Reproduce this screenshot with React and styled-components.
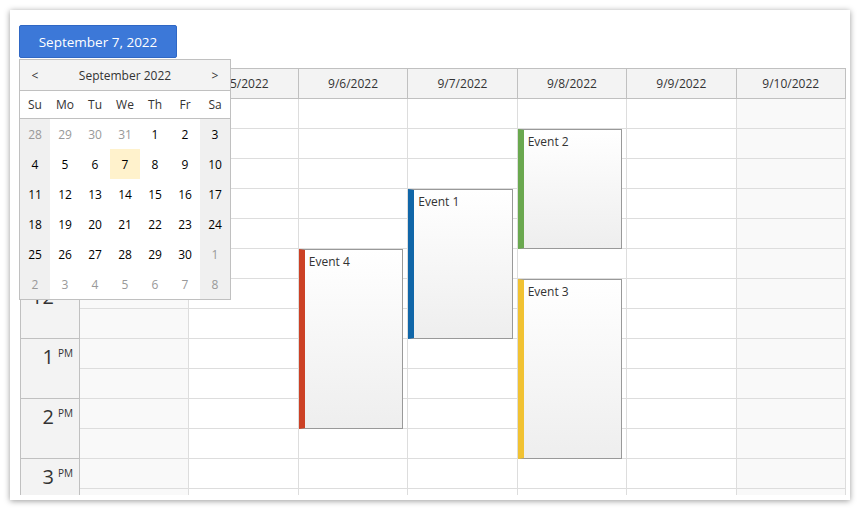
import styled, { createGlobalStyle } from "styled-components";

const GlobalStyle = createGlobalStyle`
	body {
		margin: 0;
		background: #fff;
		font-family: "Open Sans", "Noto Sans", sans-serif;
		color: #333;
	}
`;

const Page = styled.div`
	padding: 10px;
`;

const Card = styled.div`
	position: relative;
	width: 840px;
	height: 490px;
	box-sizing: border-box;
	padding: 15px 0 0 9px;
	background: #fff;
	box-shadow: 0 1px 6px rgba(0, 0, 0, 0.4);
	overflow: hidden;
`;

const DateButton = styled.button`
	display: block;
	width: 158px;
	height: 33px;
	margin: 0;
	padding: 0;
	border: 1px solid #2f67c4;
	border-radius: 2px;
	background: #3c78d8;
	color: #fff;
	font-family: "Open Sans", sans-serif;
	font-size: 13.5px;
	cursor: pointer;
`;

const Scheduler = styled.div`
	width: 826px;
	height: 427px;
	margin: 10px 0 0 1px;
	box-sizing: border-box;
	border-left: 1px solid #c0c0c0;
	overflow: hidden;
	font-size: 12px;
`;

const HeaderRow = styled.div`
	display: grid;
	grid-template-columns: 59px repeat(7, 1fr);
	height: 31px;
	box-sizing: border-box;
	border-top: 1px solid #c0c0c0;
	border-bottom: 1px solid #c0c0c0;
	background: #f3f3f3;
`;

const HeaderCell = styled.div`
	display: flex;
	align-items: center;
	justify-content: center;
	border-right: 1px solid #c0c0c0;
	color: #333;
`;

const Body = styled.div`
	display: grid;
	grid-template-columns: 59px repeat(7, 1fr);
`;

const TimeColumn = styled.div`
	display: flex;
	flex-direction: column;
	background: #f3f3f3;
	border-right: 1px solid #c0c0c0;
`;

const HourCell = styled.div`
	display: flex;
	justify-content: flex-end;
	align-items: flex-start;
	height: 60px;
	box-sizing: border-box;
	padding: 4px 6px 0 0;
	border-bottom: 1px solid #c0c0c0;
	color: #333;
`;

const HourNumber = styled.span`
	font-size: 20px;
	line-height: 27px;
`;

const HourSuffix = styled.span`
	font-size: 10px;
	line-height: 14px;
	margin: 3px 0 0 4px;
`;

const DayColumn = styled.div`
	position: relative;
	display: flex;
	flex-direction: column;
	border-right: 1px solid #ddd;
	background: ${(p) => (p.$weekend ? "#f9f9f9" : "#fff")};
`;

const Slot = styled.div`
	height: 30px;
	box-sizing: border-box;
	border-bottom: 1px solid #ddd;
`;

const Event = styled.div`
	position: absolute;
	left: 0;
	right: 4px;
	box-sizing: border-box;
	padding: 3px 4px;
	border: 1px solid #999;
	border-left: 6px solid ${(p) => p.$color};
	background: linear-gradient(to bottom, #fff 0%, #eee 100%);
	color: #333;
	font-size: 12px;
`;

const Picker = styled.div`
	position: absolute;
	top: 49px;
	left: 9px;
	z-index: 5;
	width: 212px;
	box-sizing: border-box;
	border: 1px solid #c0c0c0;
	background: #fff;
	font-size: 12px;
	color: #333;
`;

const PickerTitle = styled.div`
	display: grid;
	grid-template-columns: 30px 1fr 30px;
	align-items: center;
	height: 30px;
	border-bottom: 1px solid #c0c0c0;
	background: #f3f3f3;
	text-align: center;
`;

const Arrow = styled.span`
	cursor: pointer;
`;

const DayNames = styled.div`
	display: grid;
	grid-template-columns: repeat(7, 30px);
	height: 27px;
	align-items: center;
	border-bottom: 1px solid #c0c0c0;
	text-align: center;
`;

const DayGrid = styled.div`
	display: grid;
	grid-template-columns: repeat(7, 30px);
	grid-auto-rows: 30px;
`;

const DayCell = styled.div`
	display: flex;
	align-items: center;
	justify-content: center;
	color: ${(p) => (p.$other ? "#999" : "#000")};
	background: ${(p) => (p.$selected ? "#fff2cc" : p.$weekend ? "#f0f0f0" : "transparent")};
`;

const days = [
	{ label: "9/4/2022", weekend: true },
	{ label: "9/5/2022" },
	{ label: "9/6/2022" },
	{ label: "9/7/2022" },
	{ label: "9/8/2022" },
	{ label: "9/9/2022" },
	{ label: "9/10/2022", weekend: true },
];

const hours = [
	["9", "AM"],
	["10", "AM"],
	["11", "AM"],
	["12", "PM"],
	["1", "PM"],
	["2", "PM"],
	["3", "PM"],
];

// start/end in hours from midnight
const events = [
	{ day: 3, text: "Event 1", start: 10.5, end: 13, color: "#1066a8" },
	{ day: 4, text: "Event 2", start: 9.5, end: 11.5, color: "#6aa84f" },
	{ day: 4, text: "Event 3", start: 12, end: 15, color: "#f1c232" },
	{ day: 2, text: "Event 4", start: 11.5, end: 14.5, color: "#cc4125" },
];

const weeks = [
	[28, 29, 30, 31, 1, 2, 3],
	[4, 5, 6, 7, 8, 9, 10],
	[11, 12, 13, 14, 15, 16, 17],
	[18, 19, 20, 21, 22, 23, 24],
	[25, 26, 27, 28, 29, 30, 1],
	[2, 3, 4, 5, 6, 7, 8],
];

const isOtherMonth = (week, value) => (week === 0 && value > 20) || (week >= 4 && value < 10);

const DatePicker = () => (
	<Picker>
		<PickerTitle>
			<Arrow>&lt;</Arrow>
			<span>September 2022</span>
			<Arrow>&gt;</Arrow>
		</PickerTitle>
		<DayNames>
			{["Su", "Mo", "Tu", "We", "Th", "Fr", "Sa"].map((d) => (
				<span key={d}>{d}</span>
			))}
		</DayNames>
		<DayGrid>
			{weeks.map((week, w) =>
				week.map((value, i) => (
					<DayCell
						key={`${w}-${i}`}
						$weekend={i === 0 || i === 6}
						$other={isOtherMonth(w, value)}
						$selected={w === 1 && value === 7}
					>
						{value}
					</DayCell>
				))
			)}
		</DayGrid>
	</Picker>
);

const App = () => {
	const firstHour = 9;
	const slots = hours.length * 2;

	return (
		<>
			<GlobalStyle />
			<Page>
				<Card>
					<DateButton>September 7, 2022</DateButton>
					<Scheduler>
						<HeaderRow>
							<HeaderCell />
							{days.map((d) => (
								<HeaderCell key={d.label}>{d.label}</HeaderCell>
							))}
						</HeaderRow>
						<Body>
							<TimeColumn>
								{hours.map(([h, suffix]) => (
									<HourCell key={h}>
										<HourNumber>{h}</HourNumber>
										<HourSuffix>{suffix}</HourSuffix>
									</HourCell>
								))}
							</TimeColumn>
							{days.map((d, i) => (
								<DayColumn key={d.label} $weekend={d.weekend}>
									{Array.from({ length: slots }, (_, s) => (
										<Slot key={s} />
									))}
									{events
										.filter((e) => e.day === i)
										.map((e) => (
											<Event
												key={e.text}
												$color={e.color}
												style={{
													top: (e.start - firstHour) * 60,
													height: (e.end - e.start) * 60,
												}}
											>
												{e.text}
											</Event>
										))}
								</DayColumn>
							))}
						</Body>
					</Scheduler>
					<DatePicker />
				</Card>
			</Page>
		</>
	);
};

export default App;
